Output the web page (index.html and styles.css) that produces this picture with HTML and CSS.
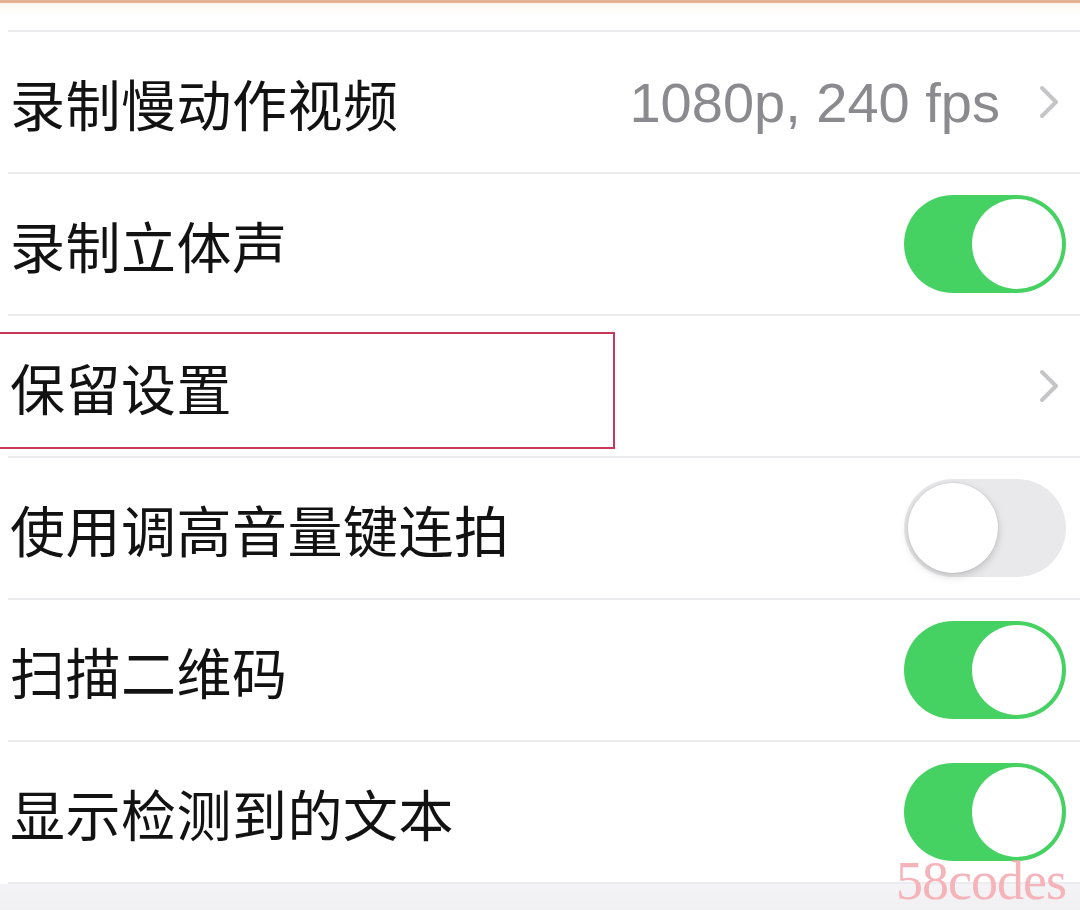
FILE: index.html
```html
<!DOCTYPE html>
<html lang="zh-CN">
<head>
  <meta charset="UTF-8"/>
  <meta name="viewport" content="width=device-width, initial-scale=1.0"/>
  <title>相机设置</title>
  <link rel="stylesheet" href="styles.css">
</head>
<body>

  <div class="top-strip"><div class="top-line"></div></div>

  <!-- SETTINGS LIST -->
  <ul class="settings">
    <li class="row">
      <span class="label">录制慢动作视频</span>
      <span class="value">1080p, 240 fps</span>
      <svg class="chevron" width="22" height="36" viewBox="0 0 22 36">
        <path d="M4 4 L18 18 L4 32" fill="none" stroke="#c5c5c8" stroke-width="4" stroke-linecap="round" stroke-linejoin="round"/>
      </svg>
    </li>
    <li class="row">
      <span class="label">录制立体声</span>
      <span class="switch on"><span class="knob"></span></span>
    </li>
    <li class="row">
      <span class="label">保留设置</span>
      <svg class="chevron" width="22" height="36" viewBox="0 0 22 36">
        <path d="M4 4 L18 18 L4 32" fill="none" stroke="#c5c5c8" stroke-width="4" stroke-linecap="round" stroke-linejoin="round"/>
      </svg>
      <div class="highlight"></div>
    </li>
    <li class="row">
      <span class="label">使用调高音量键连拍</span>
      <span class="switch"><span class="knob"></span></span>
    </li>
    <li class="row">
      <span class="label">扫描二维码</span>
      <span class="switch on"><span class="knob"></span></span>
    </li>
    <li class="row">
      <span class="label">显示检测到的文本</span>
      <span class="switch on"><span class="knob"></span></span>
    </li>
  </ul>

  <div class="bottom-area"></div>

  <div class="watermark">58codes</div>

</body>
</html>
```

FILE: styles.css
```css
* {
  margin: 0;
  padding: 0;
  box-sizing: border-box;
}

html, body {
  height: 100%;
}

body {
  font-family: "Noto Sans CJK SC", "Liberation Sans", sans-serif;
  background: #ffffff;
  color: #111111;
  overflow: hidden;
  position: relative;
}

.top-strip {
  height: 32px;
  border-top: 3px solid #e3b091;
  background: linear-gradient(#fff6ef, #ffffff 40%);
  display: flex;
  flex-direction: column;
  justify-content: flex-end;
}

.top-line {
  margin-left: 8px;
  border-bottom: 2px solid #ececee;
}

.settings {
  list-style: none;
}

.row {
  position: relative;
  height: 142px;
  display: flex;
  align-items: center;
  padding: 0 14px 0 2px;
  border-bottom: 2px solid #ececee;
  margin-left: 8px;
}

.label {
  flex: 1;
  font-size: 55px;
  letter-spacing: 0.5px;
  line-height: 1;
  color: #121212;
}

.value {
  font-family: "Liberation Sans", Arial, sans-serif;
  font-size: 56px;
  color: #8b8b8f;
  margin-right: 38px;
}

.chevron {
  margin-right: 6px;
}

.switch {
  width: 162px;
  height: 98px;
  border-radius: 49px;
  background: #e9e9eb;
  display: flex;
  align-items: center;
  padding: 4px;
}

.switch .knob {
  width: 90px;
  height: 90px;
  border-radius: 50%;
  background: #ffffff;
  box-shadow: 0 3px 8px rgba(0, 0, 0, 0.18), 0 0 0 1px rgba(0, 0, 0, 0.04);
}

.switch.on {
  background: #46d262;
  justify-content: flex-end;
}

.switch.on .knob {
  box-shadow: none;
}

.highlight {
  position: absolute;
  left: -12px;
  top: 16px;
  width: 619px;
  height: 117px;
  border: 2px solid #c9375d;
}

.bottom-area {
  height: 40px;
  background: linear-gradient(#f4f4f6, #eeeef1);
}

.watermark {
  position: absolute;
  right: 14px;
  bottom: 2px;
  font-family: "Liberation Serif", serif;
  font-size: 54px;
  line-height: 1;
  color: #f5b3ba;
  letter-spacing: -1px;
}
```
